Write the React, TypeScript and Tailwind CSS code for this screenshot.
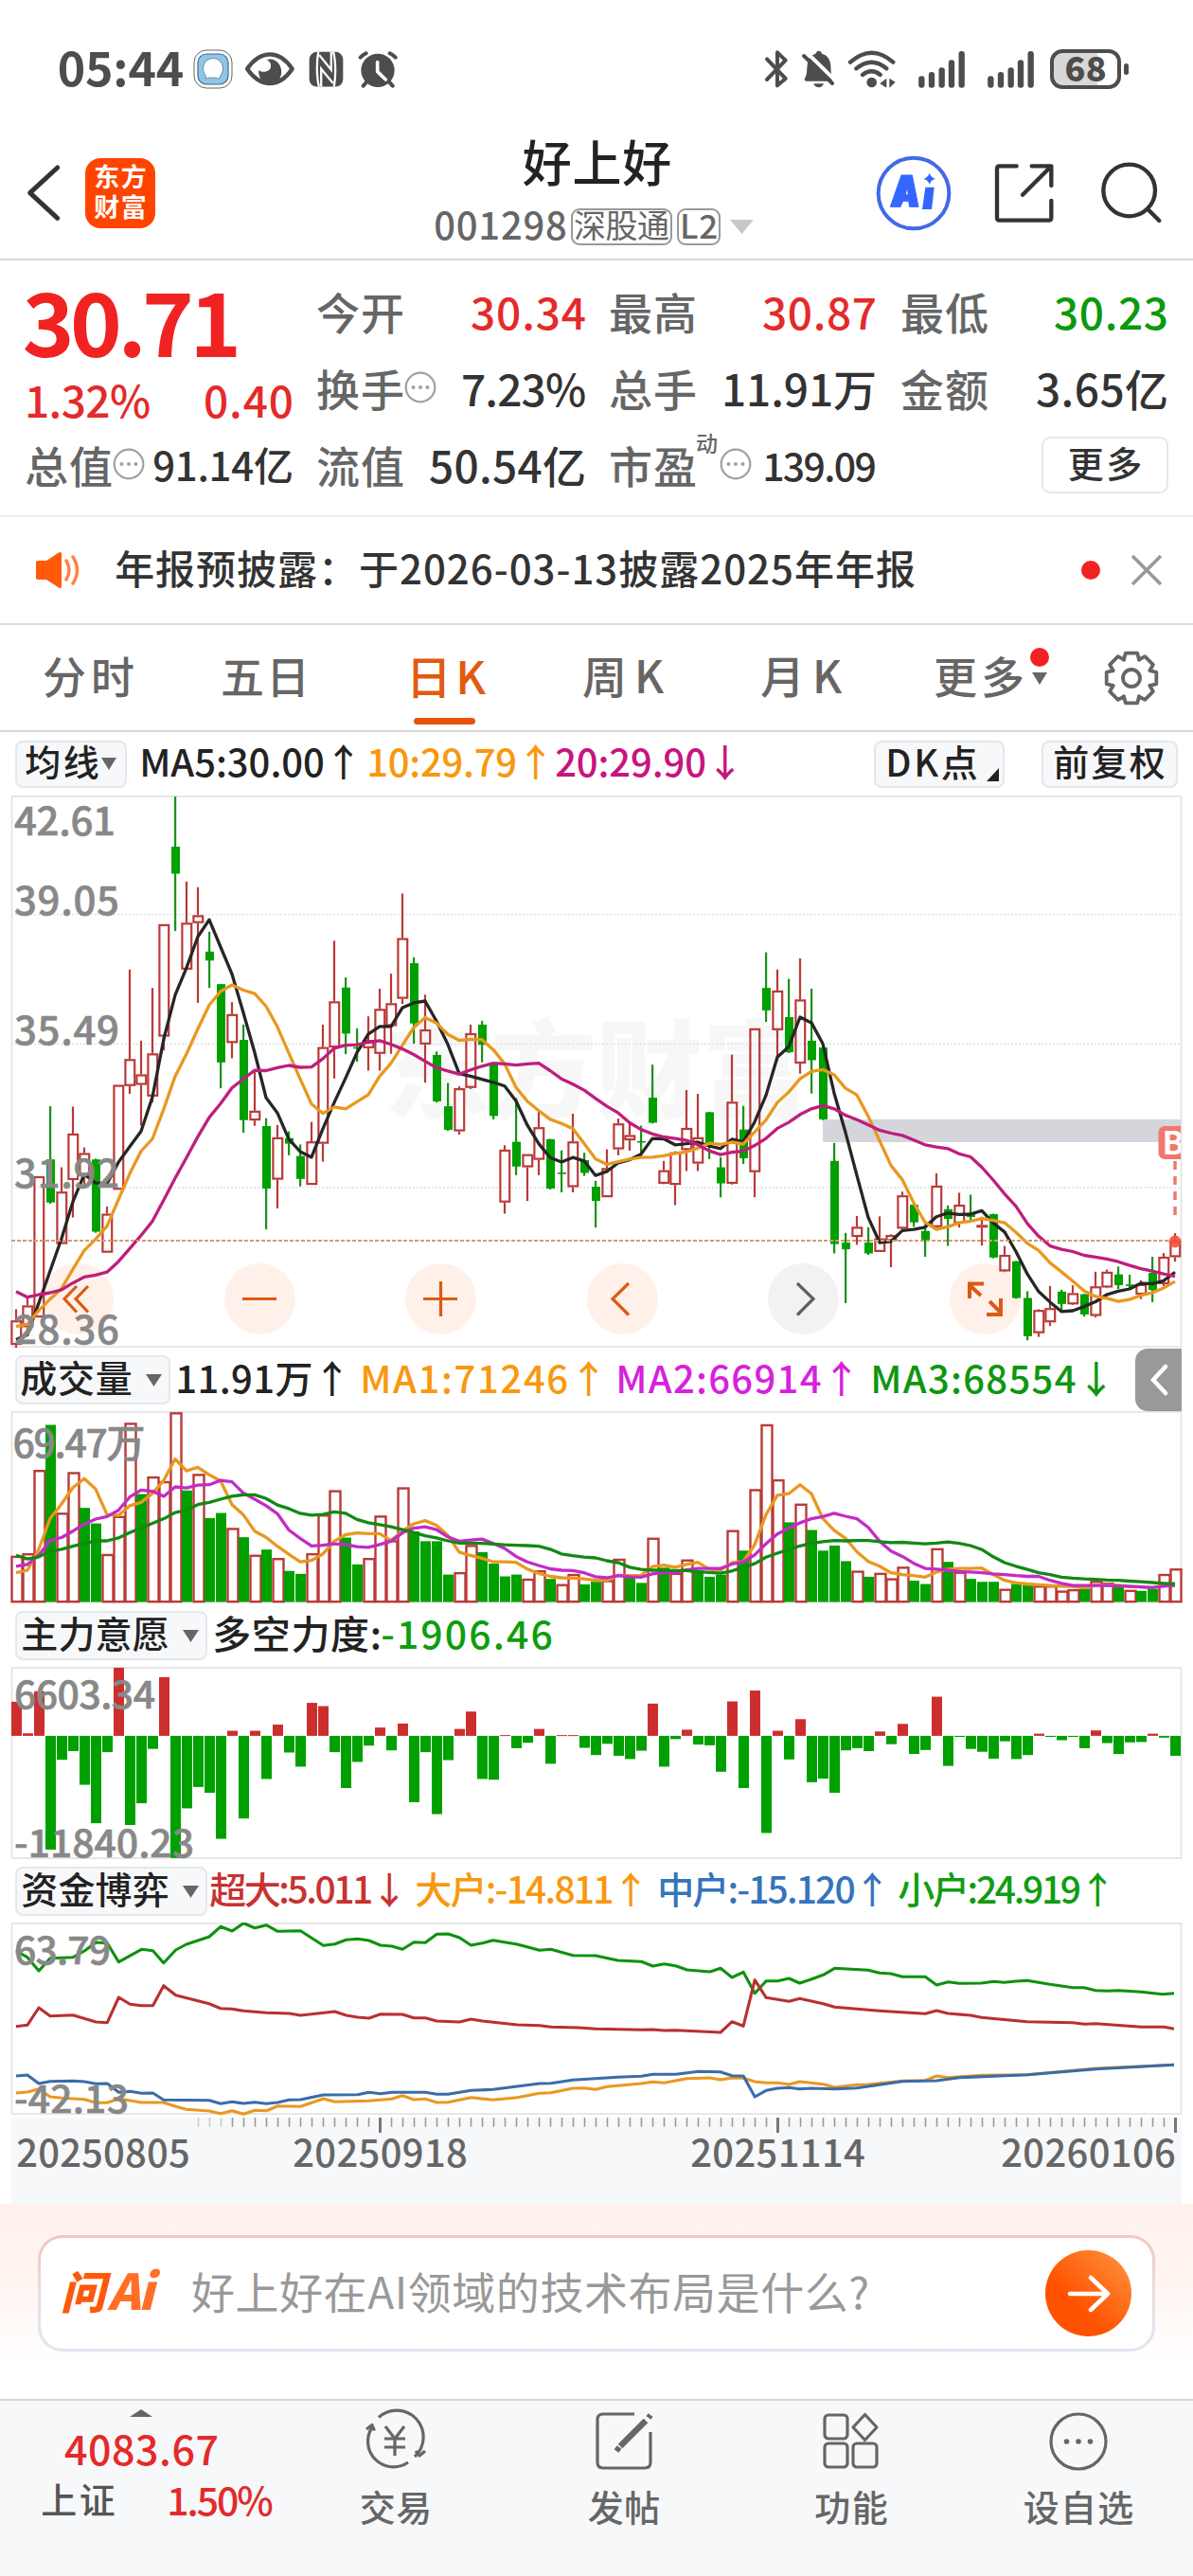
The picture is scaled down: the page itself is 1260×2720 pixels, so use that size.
import React, { useLayoutEffect, useRef, type ReactNode } from "react";

/* ---------- text fitted to a set width by letter spacing ---------- */
function Fit({ w, className = "", children }: { w: number; className?: string; children: string }) {
  const ref = useRef<HTMLSpanElement>(null);
  useLayoutEffect(() => {
    const el = ref.current;
    if (!el) return;
    el.style.letterSpacing = "0px";
    const size = parseFloat(getComputedStyle(el).fontSize);
    const natural = el.getBoundingClientRect().width;
    const n = Array.from(children).length;
    if (n > 1) el.style.letterSpacing = `${(w + size * 0.09 - natural) / (n - 1)}px`;
  }, [w, children]);
  return (
    <span className={"block shrink-0 whitespace-pre leading-none " + className} style={{ width: w }}>
      <span ref={ref} className="relative top-[-0.08em] ml-[-0.045em] inline-block">
        {children}
      </span>
    </span>
  );
}

/* ---------- chart data ---------- */
const X = (i: number) => 17 + 12 * i;
const PY = (v: number) => 830 + v / 2.529;
const VY = (v: number) => 1410 + v / 2.613;

// colour, high, body top, body bottom, low
const candles = `R1397,1427,1492,1500 R1365,1387,1445,1470 R1042,1042,1419,1419 G855,997,1112,1115 R1018,1083,1223,1223 R856,928,1052,1152 R965,980,1040,1070 G995,997,1190,1193 R1123,1142,1246,1246 R798,798,1078,1078
R490,729,801,822 R680,770,798,907 R539,714,829,845 R369,369,669,706 G28,162,234,387 R255,365,490,490 R270,345,366,579 G389,442,466,539 G529,529,738,807 R577,609,686,727
G637,678,892,926 R762,867,893,907 G887,908,1075,1184 R905,938,1051,1128 G922,940,955,986 G957,988,1049,1069 R897,949,1065,1065 R637,697,955,1003 R413,575,698,781 G511,538,661,716
G647,697,700,736 R615,678,700,760 R541,595,715,760 R501,580,641,715 R287,406,568,582 G457,473,634,688 R557,650,690,792 G709,718,842,845 G793,855,918,921 R802,807,922,931
R637,660,806,809 G627,637,691,738 G740,742,881,890 R959,971,1112,1142 G833,950,1016,1039 R983,983,1018,1108 R870,911,998,1039 G942,943,1075,1077 G973,1032,1036,1085 R875,949,1071,1085
G979,999,1033,1041 G1054,1070,1108,1179 R970,1020,1098,1098 R888,901,970,986 R900,932,946,974 G907,948,951,990 G744,832,899,901 R1001,1026,1062,1063 R975,978,1065,1119 R812,913,972,1028
R822,938,1008,1028 G870,871,955,996 G991,1018,1061,1098 R717,843,1062,1064 G854,917,994,1009 R647,647,1031,1098 G444,539,599,630 R490,546,652,734 G515,617,711,713 R460,570,741,768
G541,680,732,821 G698,698,890,892 G953,1001,1223,1248 G1193,1219,1237,1381 R1148,1177,1204,1225 G1178,1219,1248,1252 R1149,1208,1244,1244 R1197,1199,1215,1285 R1083,1093,1182,1186 G1118,1118,1165,1177
G1170,1188,1215,1257 R1034,1067,1178,1180 G1120,1130,1156,1228 R1086,1118,1168,1179 G1091,1143,1151,1158 R1150,1172,1179,1227 G1142,1143,1259,1261 R1228,1252,1296,1298 G1268,1269,1367,1369 G1349,1367,1469,1480
R1397,1399,1461,1471 R1335,1394,1432,1442 G1345,1350,1383,1400 R1333,1354,1384,1386 G1356,1357,1411,1417 R1297,1336,1415,1419 R1291,1297,1339,1341 G1283,1304,1333,1343 G1305,1331,1334,1345 R1320,1330,1358,1370
G1257,1300,1346,1378 R1247,1257,1330,1335 R1194,1215,1258,1270`
  .split(/\s+/)
  .map((s) => ({ up: s[0] === "R", v: s.slice(1).split(",").map(Number) }));

const ma5 = [1478, 1465, 1380, 1294, 1208, 1110, 1037, 1060, 1062, 1005, 963, 922, 830, 675, 558, 485, 402, 357, 430, 502, 605, 712, 832, 873, 943, 976, 991, 915, 845, 780, 712, 662, 642, 642, 592, 579, 574, 628, 690, 768, 775, 783, 791, 801, 841, 906, 955, 992, 1004, 992, 1001, 1040, 1029, 1006, 998, 983, 941, 942, 958, 955, 951, 961, 968, 943, 950, 897, 826, 724, 696, 617, 632, 688, 820, 925, 1040, 1152, 1219, 1216, 1187, 1184, 1178, 1150, 1140, 1144, 1143, 1134, 1167, 1191, 1243, 1303, 1350, 1378, 1403, 1401, 1390, 1377, 1358, 1349, 1343, 1328, 1329, 1321, 1298];
const ma10 = [1443, 1437, 1400, 1370, 1342, 1290, 1240, 1210, 1175, 1105, 1035, 975, 942, 862, 775, 715, 648, 585, 548, 531, 545, 554, 588, 643, 713, 782, 849, 874, 857, 862, 843, 824, 775, 740, 692, 645, 618, 633, 663, 679, 676, 677, 704, 742, 805, 842, 867, 890, 901, 915, 955, 996, 1010, 1003, 996, 992, 991, 987, 981, 977, 967, 954, 957, 951, 956, 924, 892, 845, 817, 782, 762, 757, 771, 807, 825, 882, 947, 1013, 1051, 1113, 1165, 1184, 1177, 1166, 1162, 1155, 1160, 1166, 1192, 1221, 1240, 1273, 1297, 1322, 1348, 1363, 1368, 1376, 1371, 1360, 1353, 1340, 1323];
const ma20 = [1350, 1365, 1358, 1353, 1345, 1327, 1311, 1306, 1298, 1270, 1235, 1200, 1162, 1105, 1047, 992, 936, 885, 848, 806, 782, 759, 760, 752, 746, 751, 750, 728, 700, 692, 691, 684, 680, 690, 702, 717, 735, 752, 761, 769, 758, 748, 740, 742, 745, 742, 740, 760, 782, 796, 812, 834, 855, 873, 899, 917, 929, 937, 941, 946, 958, 974, 984, 978, 975, 960, 941, 914, 898, 877, 862, 853, 862, 879, 891, 905, 919, 927, 933, 945, 958, 964, 968, 982, 990, 1018, 1052, 1089, 1122, 1168, 1202, 1228, 1237, 1243, 1253, 1258, 1263, 1270, 1280, 1289, 1295, 1303, 1309];

const volumes = `R608 R601 R371 G247 R489 R377 G476 G519 R603 R498 R241 G438 R389 R402 R212 G428 R382 G504 G490 R531 G557 R605 G591 R614 G650 G658 R601 R494 R427 G558 G632 R614 R497 R565 R419 G541 G568 G568 G660 R653 R578 G598 G630 G665 G660 R671 R648 G672 R686 R658 G687 G680 R675 R616 G668 G683 R558 G641 R655 R618 G650 G666 G660 R537 G594 R424 R245 R397 G516 R464 G537 G594 G580 G623 R649 G666 R655 R670 R638 G677 G686 R587 G625 R652 G672 G680 G680 R699 G686 G690 R690 R690 R704 R700 G699 R677 R682 G690 R702 G705 G700 R658 R643`
  .split(" ")
  .map((s) => ({ up: s[0] === "R", v: Number(s.slice(1)) }));
const vma1 = [655, 648, 590, 505, 465, 420, 395, 424, 494, 497, 470, 461, 436, 400, 341, 374, 364, 385, 402, 467, 495, 540, 557, 582, 604, 625, 621, 603, 568, 550, 545, 547, 547, 566, 540, 520, 511, 524, 552, 598, 607, 615, 625, 625, 626, 645, 657, 665, 669, 670, 672, 676, 676, 662, 663, 662, 638, 634, 640, 632, 626, 645, 648, 627, 624, 578, 495, 441, 437, 412, 437, 505, 538, 560, 597, 624, 637, 655, 660, 663, 667, 653, 645, 643, 643, 642, 660, 676, 683, 686, 688, 690, 692, 693, 697, 690, 688, 690, 692, 694, 696, 690, 685];
const vma2 = [637, 632, 607, 566, 558, 540, 521, 507, 500, 483, 446, 427, 430, 444, 418, 421, 413, 412, 400, 404, 435, 452, 470, 492, 537, 560, 581, 579, 575, 577, 583, 585, 577, 568, 545, 532, 528, 536, 556, 568, 565, 562, 574, 588, 610, 625, 635, 644, 648, 649, 655, 666, 669, 663, 666, 667, 658, 655, 655, 647, 643, 643, 643, 631, 625, 606, 575, 548, 532, 517, 506, 500, 491, 499, 506, 530, 568, 595, 610, 629, 643, 645, 648, 652, 653, 655, 658, 660, 663, 665, 665, 676, 684, 690, 690, 690, 690, 691, 693, 694, 696, 692, 690];
const vma3 = [607, 617, 611, 595, 590, 582, 574, 567, 567, 559, 544, 532, 519, 506, 489, 482, 467, 461, 452, 444, 440, 440, 450, 468, 478, 491, 496, 494, 487, 491, 508, 517, 522, 528, 536, 544, 553, 559, 567, 573, 573, 574, 576, 578, 579, 580, 582, 590, 603, 608, 612, 614, 622, 627, 640, 646, 648, 648, 649, 649, 652, 654, 656, 650, 640, 630, 612, 601, 591, 581, 574, 569, 566, 567, 566, 566, 569, 572, 571, 573, 575, 573, 570, 574, 580, 591, 611, 627, 637, 646, 655, 660, 667, 670, 672, 673, 675, 676, 678, 680, 682, 684, 686];

const force = [1011, 1098, 982, 1419, 1171, 1147, 1240, 1346, 1150, 917, 1351, 1291, 1141, 943, 1442, 1305, 1246, 1262, 1389, 1091, 1333, 1091, 1224, 1074, 1151, 1190, 1014, 1023, 1150, 1249, 1177, 1132, 1082, 1145, 1071, 1288, 1150, 1321, 1172, 1086, 1038, 1224, 1226, 1103, 1139, 1124, 1086, 1182, 1103, 1103, 1138, 1158, 1127, 1160, 1169, 1146, 1016, 1190, 1114, 1088, 1129, 1131, 1204, 1010, 1249, 980, 1373, 1091, 1170, 1059, 1233, 1223, 1262, 1145, 1139, 1147, 1093, 1128, 1072, 1155, 1144, 997, 1188, 1108, 1141, 1149, 1168, 1120, 1169, 1158, 1099, 1108, 1117, 1108, 1139, 1090, 1125, 1155, 1123, 1122, 1099, 1110, 1160];

const funds: [string, string][] = [
  ["#0f910f", "21,300 36,320 51,363 66,323 96,320 111,300 126,273 141,275 156,335 186,295 201,299 215,338 231,297 245,279 275,255 290,223 305,237 320,212 335,227 350,218 365,238 395,236 425,283 440,278 455,265 470,262 485,267 500,282 515,285 529,295 544,272 559,274 574,247 589,246 604,258 619,282 634,275 648,266 680,279 709,298 724,295 753,314 783,315 812,330 843,334 858,348 873,341 888,347 903,360 933,366 947,355 962,384 977,367 992,434 1007,395 1022,395 1037,387 1051,402 1066,390 1082,376 1097,355 1141,361 1156,370 1171,372 1186,382 1216,382 1231,408 1246,398 1261,403 1290,402 1306,397 1320,400 1335,396 1350,394 1380,406 1410,416 1425,416 1440,425 1455,427 1470,425 1500,430 1528,437 1543,434"],
  ["#b93030", "21,539 36,535 51,480 66,506 96,503 126,525 141,527 156,447 171,469 186,473 201,473 215,410 231,440 275,467 290,482 305,484 320,490 350,496 380,498 395,504 440,492 455,504 470,510 485,513 500,500 529,501 544,512 559,512 574,522 604,525 619,516 634,522 680,534 709,536 724,541 760,543 783,547 843,550 858,549 873,552 888,551 947,558 962,524 977,538 992,392 1007,448 1037,460 1051,451 1082,467 1097,478 1156,490 1216,499 1231,489 1246,498 1276,504 1290,511 1350,524 1410,527 1425,532 1440,530 1500,541 1530,541 1543,547"],
  ["#e9981f", "21,750 36,747 51,737 66,762 81,766 96,768 111,770 126,781 141,781 156,768 186,780 215,780 231,793 245,802 275,807 290,815 305,806 320,817 335,805 350,806 365,791 395,793 425,768 440,778 485,775 515,769 529,758 544,771 559,769 574,780 589,779 619,764 648,772 680,764 709,751 724,749 753,735 768,734 783,739 798,730 843,720 858,715 873,718 903,704 933,702 947,708 962,702 977,703 992,714 1007,718 1022,718 1037,723 1051,714 1082,722 1097,732 1126,724 1141,723 1186,712 1216,710 1231,696 1246,701 1290,694 1350,692 1440,672 1543,661"],
  ["#3a6ca9", "21,696 36,693 51,720 66,713 96,712 111,714 126,721 141,720 156,748 171,745 186,751 201,750 215,772 275,773 290,784 305,778 320,783 335,779 350,784 365,780 380,772 395,771 425,756 470,755 485,748 500,752 515,748 559,748 574,754 589,754 619,742 648,739 709,720 724,719 753,709 812,700 843,697 858,691 888,691 918,682 947,683 962,695 977,696 992,762 1007,742 1022,735 1037,733 1051,737 1066,735 1097,737 1126,734 1186,713 1231,711 1261,701 1350,692 1440,674 1543,661"],
];
const fundPoints = (s: string) =>
  s.split(" ").map((p) => {
    const [a, b] = p.split(",").map(Number);
    return `${(a / 1.2444).toFixed(1)},${(1960 + b / 3).toFixed(1)}`;
  }).join(" ");

const Line = ({ d, y, c }: { d: number[]; y: (v: number) => number; c: string }) => (
  <polyline points={d.map((v, i) => `${X(i)},${y(v).toFixed(1)}`).join(" ")} fill="none" stroke={c} strokeWidth="3.300" strokeLinejoin="round" />
);

const Frame = ({ top, bottom }: { top: number; bottom: number }) => (
  <rect x="12.5" y={top} width="1235" height={bottom - top} fill="none" stroke="#e2e2e2" strokeWidth="1.6" />
);

const RED = "#b93a38";
const GREEN = "#00a000";

function Axis({ x = 16.5, y, w, size = 42, children }: { x?: number; y: number; w: number; size?: number; children: string }) {
  return (
    <text x={x - 1.5} y={y + size * 0.367} textLength={w + 4} fontSize={size} fill="#888888" stroke="#888888" strokeWidth=".6" className="font-medium">
      {children}
    </text>
  );
}

function PriceChart() {
  return (
    <svg width="1260" height="584" viewBox="0 840 1260 584" className="relative block">
      <text x="406" y="1172" textLength="448" fontSize="112" fill="#f7f7f7" className="font-black">东方财富</text>
      {[965.6, 1102.4, 1253.9].map((y) => (
        <line key={y} x1="12" x2="1247" y1={y} y2={y} stroke="#dcdcdc" strokeWidth="1.2" strokeDasharray="2 2" />
      ))}
      <Frame top={840.9} bottom={1422} />
      <rect x="869" y="1182" width="378" height="24" fill="#d4d6db" />
      {candles.map(({ up, v }, i) => {
        const [h, t, b, l] = v.map(PY);
        const x = X(i);
        return up ? (
          <g key={i} stroke={RED} strokeWidth="2.200" fill="none">
            {t > h && <line x1={x} x2={x} y1={h} y2={t} />}
            {l > b && <line x1={x} x2={x} y1={b} y2={l} />}
            <rect x={x - 4.6} y={t + 1} width="9.8" height={Math.max(b - t - 2, 0.5)} />
          </g>
        ) : (
          <g key={i} fill={GREEN}>
            <rect x={x - 1} y={h} width="2.200" height={l - h} fill="#1a921a" />
            <rect x={x - 4} y={t} width="9" height={Math.max(b - t, 1.6)} />
          </g>
        );
      })}
      <Line d={ma5} y={PY} c="#262626" />
      <Line d={ma10} y={PY} c="#e9981f" />
      <Line d={ma20} y={PY} c="#be1e7d" />
      <line x1="12" x2="1247" y1="1310" y2="1310" stroke="#d59b6c" strokeWidth="1.8" strokeDasharray="4 2" />
      <Axis y={867} w={103}>42.61</Axis>
      <Axis y={951} w={107}>39.05</Axis>
      <Axis y={1088} w={107}>35.49</Axis>
      <Axis y={1239} w={107}>31.92</Axis>
      <Axis y={1404} w={107}>28.36</Axis>
      <path d="M1247 1189h-17a6.500 6.500 0 0 0-6.500 6.500v22a6.500 6.500 0 0 0 6.500 6.500h17z" fill="#f07868" />
      <svg x="1223" y="1188" width="24" height="38" viewBox="1223 1188 24 38">
        <text x="1227.500" y="1219" fontSize="34" fill="#fff" className="font-bold">B</text>
      </svg>
      <line x1="1241" x2="1241" y1="1226" y2="1288" stroke="#ef7a6c" strokeWidth="3.500" strokeDasharray="9 7" />
      <circle cx="1241" cy="1311" r="6.500" fill="#f4523b" fillOpacity=".9" />
    </svg>
  );
}

function VolumeChart() {
  return (
    <svg width="1260" height="204" viewBox="0 1490 1260 204" className="block">
      <Frame top={1490.8} bottom={1691.500} />
      {volumes.map(({ up, v }, i) => {
        const t = VY(v);
        return up ? (
          <rect key={i} x={X(i) - 4.500} y={t + 1.2} width="11" height={1691 - t - 1} fill="#fff" stroke={RED} strokeWidth="2.4" />
        ) : (
          <rect key={i} x={X(i) - 5} y={t} width="11" height={1691.500 - t} fill={GREEN} />
        );
      })}
      <Line d={vma1} y={VY} c="#e9981f" />
      <Line d={vma2} y={VY} c="#c22cc6" />
      <Line d={vma3} y={VY} c="#138913" />
      <Axis x={15} y={1524} w={136} size={41}>69.47万</Axis>
    </svg>
  );
}

function ForceChart() {
  const zero = VY(1105);
  return (
    <svg width="1260" height="204" viewBox="0 1760 1260 204" className="block">
      <Frame top={1761} bottom={1962} />
      {force.map((v, i) => {
        const y = VY(v);
        return <rect key={i} x={X(i) - 5} y={Math.min(y, zero)} width="11" height={Math.max(Math.abs(y - zero), 1)} fill={v < 1105 ? "#cc2e2e" : GREEN} />;
      })}
      <Axis y={1789} w={145} size={41}>6603.34</Axis>
      <Axis y={1946} w={186} size={41}>-11840.23</Axis>
    </svg>
  );
}

function FundChart() {
  return (
    <svg width="1260" height="206" viewBox="0 2030 1260 206" className="block">
      <Frame top={2031} bottom={2232} />
      {funds.map(([c, p]) => (
        <polyline key={c} points={fundPoints(p)} fill="none" stroke={c} strokeWidth="3.100" strokeLinejoin="round" />
      ))}
      <Axis y={2059} w={98} size={41}>63.79</Axis>
      <Axis y={2216} w={117} size={41}>-42.13</Axis>
    </svg>
  );
}

/* ---------- small pieces ---------- */
const Dots = ({ className = "" }: { className?: string }) => (
  <svg width="34" height="34" viewBox="0 0 34 34" className={"shrink-0 " + className}>
    <circle cx="17" cy="17" r="15.300" fill="none" stroke="#a0a0a0" strokeWidth="2.200" />
    {[9.500, 17, 24.500].map((x) => <circle key={x} cx={x} cy="17" r="2" fill="#a0a0a0" />)}
  </svg>
);

const Down = ({ w = 17, h = 13, c = "#666", className = "" }: { w?: number; h?: number; c?: string; className?: string }) => (
  <svg width={w} height={h} viewBox="0 0 10 10" preserveAspectRatio="none" className={"shrink-0 " + className}>
    <path d="M0 0h10L5 10z" fill={c} />
  </svg>
);

const Chip = ({ className, children }: { className: string; children: ReactNode }) => (
  <div className={"flex shrink-0 items-center rounded-lg border-2 border-[#e4e7ec] bg-[#f7f8fa] font-medium text-[#222] " + className}>{children}</div>
);

const Stat = ({ label, lead, children }: { label: string; lead?: ReactNode; children: ReactNode }) => (
  <div className="flex h-[81px] items-center">
    <Fit w={89} className="text-[46px] font-medium text-[#666]">{label}</Fit>
    {lead}
    <div className="ml-auto">{children}</div>
  </div>
);

const Signal = () => (
  <svg width="50" height="40" viewBox="570 36 150 120" className="block">
    {[[583, 118], [615, 105], [647, 91], [678, 67], [710, 39]].map(([x, y]) => (
      <rect key={x} x={x - 9.500} y={y} width="19" height={155 - y} rx="9" fill="#4d4d4d" />
    ))}
  </svg>
);

function StatusBar() {
  return (
    <div className="flex h-[146px] items-center">
      <Fit w={129} className="ml-[63px] text-[50px] font-bold text-[#4d4d4d]">05:44</Fit>
      <svg width="42" height="42" viewBox="0 0 42 42" className="ml-[12px]">
        <rect x="1" y="1" width="40" height="40" rx="13" fill="#fff" stroke="#666" strokeWidth="1" />
        <rect x="5" y="5" width="32" height="32" rx="9" fill="#8fc6e8" stroke="#456a80" strokeWidth="1.200" />
        <path d="M13.500 31c1-3-3-5-3-11a10.500 10.500 0 0 1 21 0c0 6-4 8-3.500 11-2 .5-3.500-1-5-1-2 0-3 .3-5 0-2-.3-2.500 1-4.500 1z" fill="#fff" stroke="#456a80" strokeWidth=".7" />
      </svg>
      <svg width="54" height="38" viewBox="715 40 162 114" className="ml-[12px]">
        <path d="M724 96C748 62 772 50 796 50s48 12 71 46c-23 34-47 46-71 46s-48-12-72-46z" fill="none" stroke="#4d4d4d" strokeWidth="13" strokeLinejoin="round" />
        <path d="M786 67a36 40 0 1 1-25 32c9 12 42 8 38-16-1-7-6-13-13-16z" fill="#4d4d4d" />
      </svg>
      <svg width="37" height="38" viewBox="919 38 112 114" className="ml-[14px]">
        <rect x="921" y="40" width="108" height="111" rx="24" fill="#4d4d4d" />
        <path d="M950 40c-6 30-6 80 2 111M1000 151c6-30 6-80-2-111" stroke="#fff" strokeWidth="7" fill="none" />
        <path d="M955 66v24l40 44v-24z" fill="#4d4d4d" />
        <path d="M959 151V94l38 46M991 40v57l-38-47" stroke="#fff" strokeWidth="7" fill="none" />
      </svg>
      <svg width="42" height="40" viewBox="1075 35 126 120" className="ml-[15px]">
        <circle cx="1138" cy="99" r="53" fill="#4d4d4d" />
        <path d="M1083 58q8-8 18-13M1194 58q-8-8-18-13M1092 148l14-16M1185 148l-14-16" stroke="#4d4d4d" strokeWidth="12" strokeLinecap="round" />
        <path d="M1137 73v30l26 25" fill="none" stroke="#fff" strokeWidth="11" strokeLinecap="round" strokeLinejoin="round" />
      </svg>
      <svg width="26" height="42" viewBox="81 34 78 124" className="ml-[387px]">
        <path d="M90 64l59 62-26 22V43l26 25-59 61" fill="none" stroke="#4d4d4d" strokeWidth="12" strokeLinecap="round" strokeLinejoin="round" />
      </svg>
      <svg width="36" height="42" viewBox="201 34 108 124" className="ml-[13px]">
        <path d="M219 134c-8 0-8-8-4-13 6-10 4-26 6-38 2-20 14-33 27-36 2-12 17-12 19 0 16 4 27 18 28 38 1 14 0 26 6 36 3 6 1 13-5 13z" fill="#4d4d4d" />
        <path d="M213 37l100 98" stroke="#fff" strokeWidth="12" />
        <path d="M210 54l90 87" stroke="#4d4d4d" strokeWidth="12" strokeLinecap="round" />
        <path d="M241 142h32c-5 16-27 16-32 0z" fill="#4d4d4d" />
      </svg>
      <svg width="51" height="42" viewBox="351 34 153 124" className="ml-[13px]">
        <path d="M360 74q68-60 136 0M379 94q49-40 96 0M399 114q29-22 56 0" fill="none" stroke="#4d4d4d" strokeWidth="13" strokeLinecap="round" />
        <circle cx="428" cy="138" r="16" fill="#4d4d4d" />
        <path d="M475 125v30l-21-13zM484 125v30l19-18z" fill="#4d4d4d" />
      </svg>
      <div className="ml-[23px]"><Signal /></div>
      <div className="ml-[23px]"><Signal /></div>
      <div className="ml-[17px] flex h-[42px] w-[75px] items-center justify-center rounded-[13px] border-[4px] border-[#4d4d4d] bg-[linear-gradient(90deg,#d8d8d8_68%,#fff_68%)]">
        <Fit w={41} className="text-[36px] font-black text-[#4d4d4d]">68</Fit>
      </div>
      <div className="ml-[3px] h-[12px] w-[5px] rounded-full bg-[#4d4d4d]" />
    </div>
  );
}

function Header() {
  return (
    <div className="flex h-[129px] border-b-2 border-[#d8d8d8] text-[#222]">
      <div className="flex h-[115px] w-[459px] items-center">
        <svg width="38" height="62" viewBox="25 398 114 184" className="ml-[28px]">
          <path d="M123 409L36 489l87 80" fill="none" stroke="#333" strokeWidth="15" strokeLinecap="round" strokeLinejoin="round" />
        </svg>
        <div className="ml-[24px] flex h-[74px] w-[74px] flex-col items-center justify-center gap-[5px] rounded-[16px] bg-[#ff4400] text-[27px] font-bold text-white">
          <Fit w={53}>东方</Fit>
          <Fit w={53}>财富</Fit>
        </div>
      </div>
      <div className="w-[342px]">
        <div className="flex h-[56px] items-center pl-[95px]">
          <Fit w={153} className="text-[52px] font-medium">好上好</Fit>
        </div>
        <div className="mt-[18px] flex h-[39px] items-center text-[#666]">
          <Fit w={137} className="ml-[1px] text-[40px] font-medium">001298</Fit>
          <div className="ml-[6px] flex h-[39px] w-[107px] items-center justify-center rounded-[9px] border-2 border-[#999]">
            <Fit w={98} className="text-[34px]">深股通</Fit>
          </div>
          <div className="ml-[5px] flex h-[39px] w-[46px] items-center justify-center rounded-[9px] border-2 border-[#999]">
            <Fit w={37} className="text-[35px] font-medium">L2</Fit>
          </div>
          <Down w={25} h={15} c="#c8c8c8" className="ml-[10px]" />
        </div>
      </div>
      <div className="flex h-[115px] items-center">
        <svg width="80" height="80" viewBox="435 369 240 240" className="ml-[124px]">
          <circle cx="555" cy="489" r="112" fill="none" stroke="#4169e8" strokeWidth="12" />
          <path d="M516 432h34l20 100h-28l-3-18h-18l-8 18h-32zM529 494h9l-4-28z" fill="#3366ff" stroke="#3366ff" strokeWidth="3" strokeLinejoin="round" fillRule="evenodd" />
          <path d="M592 470h28l-8 70h-30zM605 425q4 14 19 18-15 4-19 18-4-14-19-18 15-4 19-18z" fill="#3366ff" />
        </svg>
        <svg width="66" height="66" viewBox="808 390 198 198" className="ml-[44px]">
          <path d="M882 403h-54q-8 0-8 8v156q0 8 8 8h156q8 0 8-8v-54M930 403h62v62M988 407l-87 87" fill="none" stroke="#333" strokeWidth="13" strokeLinecap="round" strokeLinejoin="round" />
        </svg>
        <svg width="68" height="68" viewBox="1144 387 204 204" className="ml-[46px]">
          <circle cx="1239" cy="480" r="82" fill="none" stroke="#333" strokeWidth="13" />
          <path d="M1298 540l36 36" stroke="#333" strokeWidth="13" strokeLinecap="round" />
        </svg>
      </div>
    </div>
  );
}

function Quote() {
  return (
    <div className="flex h-[271px] border-b-2 border-[#ececec] pl-[28px] pt-[16px] text-[#333]">
      <div className="w-[280px]">
        <div className="flex h-[105px] items-center">
          <Fit w={223} className="text-[93px] font-bold text-[#f12222]">30.71</Fit>
        </div>
        <div className="flex h-[57px] items-center justify-between text-[46px] font-medium text-[#e42a2a]">
          <Fit w={129}>1.32%</Fit>
          <Fit w={91}>0.40</Fit>
        </div>
        <div className="flex h-[81px] items-center">
          <Fit w={89} className="text-[46px] font-medium text-[#666]">总值</Fit>
          <Dots className="-mt-2 ml-[2px]" />
          <Fit w={145} className="ml-auto text-[42px] font-medium">91.14亿</Fit>
        </div>
      </div>
      <div className="ml-[28px] w-[281px]">
        <Stat label="今开"><Fit w={118} className="text-[46px] font-medium text-[#e42a2a]">30.34</Fit></Stat>
        <Stat label="换手" lead={<Dots className="-mt-2 ml-[2px]" />}><Fit w={128} className="text-[46px] font-medium">7.23%</Fit></Stat>
        <Stat label="流值"><Fit w={162} className="text-[46px] font-medium">50.54亿</Fit></Stat>
      </div>
      <div className="ml-[28px] w-[279px]">
        <Stat label="最高"><Fit w={117} className="text-[46px] font-medium text-[#e42a2a]">30.87</Fit></Stat>
        <Stat label="总手"><Fit w={160} className="text-[46px] font-medium">11.91万</Fit></Stat>
        <Stat label="市盈" lead={<><Fit w={22} className="-mt-[48px] ml-[2px] text-[23px] font-medium text-[#666]">动</Fit><Dots className="-mt-2 ml-[2px]" /></>}>
          <Fit w={117} className="text-[41px] font-medium">139.09</Fit>
        </Stat>
      </div>
      <div className="ml-[29px] w-[281px]">
        <div className="pr-[2px]">
          <Stat label="最低"><Fit w={117} className="text-[46px] font-medium text-[#0a9a0a]">30.23</Fit></Stat>
          <Stat label="金额"><Fit w={136} className="text-[46px] font-medium">3.65亿</Fit></Stat>
        </div>
        <div className="ml-auto mt-[8px] flex h-[60px] w-[134px] items-center justify-center rounded-[9px] border-2 border-[#e8e8e8]">
          <Fit w={75} className="text-[38px] font-medium">更多</Fit>
        </div>
      </div>
    </div>
  );
}

function News() {
  return (
    <div className="flex h-[114px] items-center border-b-2 border-[#dcdcdc] pl-[36px]">
      <svg width="50" height="40" viewBox="0 0 50 40">
        <path d="M2 12q0-2 2-2h9L26 1.500q3-1.500 3 1.500v34q0 3-3 1.500L13 30H4q-2 0-2-2z" fill="#ff5a0a" />
        <path d="M34 10q6 10 0 20M41 6q9 14 0 28" fill="none" stroke="#ff8345" strokeWidth="3.500" strokeLinecap="round" />
      </svg>
      <Fit w={842} className="ml-[37px] text-[42px] font-medium text-[#333]">年报预披露：于2026-03-13披露2025年年报</Fit>
      <div className="ml-[177px] h-[20px] w-[20px] rounded-full bg-[#f12222]" />
      <svg width="32" height="32" viewBox="0 0 32 32" className="ml-[33px]">
        <path d="M1 1l30 30M31 1L1 31" stroke="#999" strokeWidth="3.600" />
      </svg>
    </div>
  );
}

const gear = Array.from({ length: 8 }, (_, k) => {
  const a = (k * Math.PI) / 4;
  return [[-0.4, 20.800], [-0.23, 27], [0.23, 27], [0.4, 20.800]].map(([d, r]) => `${(30 + r * Math.sin(a + d)).toFixed(1)},${(30 - r * Math.cos(a + d)).toFixed(1)}`).join(" ");
}).join(" ");

function Tabs() {
  return (
    <div className="flex h-[113px] items-center border-b-2 border-[#d8d8d8] text-[46px] font-medium text-[#666]">
      <Fit w={93} className="ml-[47px]">分时</Fit>
      <Fit w={90} className="ml-[95px]">五日</Fit>
      <div className="relative ml-[106px] text-[#e25a10]">
        <Fit w={80} className="text-[48px]">日K</Fit>
        <div className="absolute -bottom-[25px] left-[6px] h-[7px] w-[65px] rounded-full bg-[#e65408]" />
      </div>
      <Fit w={82} className="ml-[106px] text-[47px]">周K</Fit>
      <Fit w={82} className="ml-[106px] text-[47px]">月K</Fit>
      <Fit w={92} className="ml-[101px]">更多</Fit>
      <div className="ml-[8px] flex flex-col items-center gap-[6px] pb-[24px]">
        <div className="h-[20px] w-[20px] rounded-full bg-[#f12222]" />
        <Down w={16} h={13} />
      </div>
      <svg width="60" height="60" viewBox="0 0 60 60" className="ml-[57px]">
        <polygon points={gear} fill="none" stroke="#666" strokeWidth="3.800" strokeLinejoin="round" />
        <circle cx="30" cy="30" r="9" fill="none" stroke="#666" strokeWidth="3.800" />
      </svg>
    </div>
  );
}

const rowText = "flex h-[66px] items-center text-[40px] font-medium text-[#222]";

function Charts() {
  return (
    <>
      <div className="flex h-[67px] items-center text-[40px] font-medium">
        <Chip className="ml-[16px] h-[50px] w-[118px] pl-[10px]">
          <Fit w={75} className="text-[38px]">均线</Fit>
          <Down w={16} h={13} className="ml-[4px]" />
        </Chip>
        <Fit w={232} className="ml-[15px] text-[#222]">MA5:30.00↑</Fit>
        <Fit w={195} className="ml-[8px] text-[#f8980f]">10:29.79↑</Fit>
        <Fit w={196} className="ml-[4px] text-[#c8147f]">20:29.90↓</Fit>
        <Chip className="relative ml-[139px] h-[50px] w-[138px] pl-[12px]">
          <Fit w={94} className="text-[39px]">DK点</Fit>
          <svg width="13" height="14" viewBox="0 0 13 14" className="absolute bottom-[5px] right-[4px]"><path d="M13 0v14H0z" fill="#222" /></svg>
        </Chip>
        <Chip className="ml-[39px] h-[50px] w-[144px] pl-[12px]">
          <Fit w={115} className="text-[38px]">前复权</Fit>
        </Chip>
      </div>
      <div className="relative">
        <div className="absolute left-[45px] top-[494px] flex w-[1033px] justify-between">
          {[
            "M36 24L23 37.500l13 14M48 24L35 37.500l13 14",
            "M19 37.500h36",
            "M19 37.500h36M37.500 19v37",
            "M44 21L27 37.500l17 17",
            "M31 21l17 16.500-17 17",
            "M33 34L21 23M21 37V21.500h15M42 40l12 12M54 37v17H39",
          ].map((d, i) => (
            <svg key={d} width="75" height="75" viewBox="0 0 75 75">
              <circle cx="37.500" cy="37.500" r="37.500" fill={i === 4 ? "#f2f2f2" : "#fff0e9"} />
              <path d={d} fill="none" stroke={i === 4 ? "#606060" : "#dc5a14"} strokeWidth={i === 5 ? 4 : 3.2} />
            </svg>
          ))}
        </div>
        <PriceChart />
      </div>
      <div className={rowText}>
        <Chip className="ml-[16px] h-[52px] w-[164px] pl-[5px]">
          <Fit w={115} className="text-[39px]">成交量</Fit>
          <Down className="ml-[16px]" />
        </Chip>
        <Fit w={182} className="ml-[7px]">11.91万↑</Fit>
        <Fit w={258} className="ml-[13px] text-[#f8980f]">MA1:71246↑</Fit>
        <Fit w={255} className="ml-[12px] text-[#d622dc]">MA2:66914↑</Fit>
        <Fit w={255} className="ml-[14px] text-[#0f960f]">MA3:68554↓</Fit>
        <div className="ml-[23px] flex h-[66px] w-[49px] items-center justify-center rounded-l-[13px] bg-[#999]">
          <svg width="22" height="34" viewBox="0 0 22 34"><path d="M18 3L5 17l13 14" fill="none" stroke="#fff" strokeWidth="4.500" strokeLinecap="round" /></svg>
        </div>
      </div>
      <VolumeChart />
      <div className={rowText}>
        <Chip className="ml-[16px] h-[52px] w-[203px] pl-[6px]">
          <Fit w={153} className="text-[39px]">主力意愿</Fit>
          <Down className="ml-[16px]" />
        </Chip>
        <Fit w={175} className="ml-[7px] text-[41px]">多空力度:</Fit>
        <Fit w={178} className="ml-[3px] text-[41px] text-[#0f9d0f]">-1906.46</Fit>
      </div>
      <ForceChart />
      <div className={rowText}>
        <Chip className="ml-[16px] h-[52px] w-[203px] pl-[6px]">
          <Fit w={153} className="text-[39px]">资金博弈</Fit>
          <Down className="ml-[16px]" />
        </Chip>
        <Fit w={206} className="ml-[4px] text-[39px] text-[#c83232]">超大:5.011↓</Fit>
        <Fit w={244} className="ml-[11px] text-[39px] text-[#f8980f]">大户:-14.811↑</Fit>
        <Fit w={243} className="ml-[12px] text-[39px] text-[#3574bb]">中户:-15.120↑</Fit>
        <Fit w={227} className="ml-[11px] text-[39px] text-[#0f9d0f]">小户:24.919↑</Fit>
      </div>
      <FundChart />
      <div className="mx-[12px] h-[91px] bg-[#f7f8fa]">
        <svg width="1236" height="18" viewBox="12 2236 1236 18" className="block">
          {Array.from({ length: 87 }, (_, k) => {
            const x = 209.500 + 12 * k;
            const major = k === 16 || k === 51 || k === 86;
            return <line key={k} x1={x} x2={x} y1="2236" y2={major ? 2252 : 2245.7} stroke={major ? "#777" : k < 3 ? "#ccc" : "#999"} strokeWidth={major ? 3 : 1.6} />;
          })}
        </svg>
        <div className="flex h-[40px] items-center pl-[7px] text-[40px] font-medium text-[#666]">
          <Fit w={180}>20250805</Fit>
          <Fit w={181} className="ml-[112px]">20250918</Fit>
          <Fit w={181} className="ml-[239px]">20251114</Fit>
          <Fit w={181} className="ml-[147px]">20260106</Fit>
        </div>
      </div>
    </>
  );
}

function AskBar() {
  return (
    <div className="h-[206px] bg-[linear-gradient(180deg,#fff2ed_0%,#fff5f1_40%,#ffffff_82%)] pt-[33px]">
      <div className="mx-[40px] rounded-[26px] bg-[linear-gradient(180deg,#f2c6bd,#e8dde2_50%,#dfe6f0)] p-[3px]">
        <div className="flex h-[117px] items-center rounded-[23px] bg-white">
          <div className="ml-[23px] flex w-[104px] items-center">
            <Fit w={45} className="text-[47px] font-black italic text-[#fc5a0a]">问</Fit>
            <Fit w={44} className="ml-[5px] text-[52px] font-black italic text-[#ff6f28]">Ai</Fit>
          </div>
          <Fit w={712} className="ml-[34px] text-[46px] text-[#999]">好上好在AI领域的技术布局是什么?</Fit>
          <div className="ml-auto mr-[22px] flex h-[91px] w-[91px] items-center justify-center rounded-full bg-[linear-gradient(45deg,#ff5200_35%,#ff9540)]">
            <svg width="46" height="40" viewBox="0 0 46 40"><path d="M3 20h40M25 3l18 17-18 17" fill="none" stroke="#fff" strokeWidth="4.500" strokeLinecap="round" strokeLinejoin="round" /></svg>
          </div>
        </div>
      </div>
    </div>
  );
}

const navIcons = [
  <g key="a">
    <path d="M17 9.500A27 27 0 0 1 55 51M48 57A27 27 0 0 1 10 20" />
    <path d="M4 22l6-4.500 2.500 6M66 45l-6 5-4-5" />
    <path d="M24 19l10 13 10-13M34 32v18M23 32h22M23 41h22" />
  </g>,
  <g key="b">
    <path d="M46 6H13q-6 0-6 6v45q0 6 6 6h44q6 0 6-6V25" />
    <path d="M58 13L31 40" strokeWidth="6.500" />
    <path d="M61 10l2-3M30 41l-3 4" strokeWidth="6" />
  </g>,
  <g key="c">
    <rect x="7" y="7" width="24" height="25" rx="4" /><rect x="7" y="37" width="24" height="25" rx="4" /><rect x="37" y="37" width="25" height="25" rx="4" />
    <path d="M49.500 6.500L62 20 49.500 33.500 37 20z" />
  </g>,
  <g key="d">
    <circle cx="35" cy="35" r="29" />
    {[22.500, 35, 47.500].map((x) => <circle key={x} cx={x} cy="35" r="2.800" fill="#666" stroke="none" />)}
  </g>,
];

function NavItem({ w, ml, label, icon }: { w: number; ml: string; label: string; icon: ReactNode }) {
  return (
    <div className={"flex w-[140px] shrink-0 flex-col items-center " + ml}>
      <svg width="70" height="70" viewBox="0 0 70 70" fill="none" stroke="#666" strokeWidth="3.200" strokeLinejoin="round" className="mt-[8px] block">{icon}</svg>
      <Fit w={w} className="mt-[17px] text-[38px] font-medium text-[#666]">{label}</Fit>
    </div>
  );
}

function BottomNav() {
  return (
    <div className="flex h-[187px] border-t-2 border-[#d4d7da] bg-[#f7f8fa]">
      <div className="ml-[45px] flex w-[243px] flex-col">
        <svg width="24" height="8" viewBox="0 0 24 8" className="ml-[92px] mt-[9px]"><path d="M12 0l12 8H0z" fill="#666" /></svg>
        <Fit w={159} className="ml-[25px] mt-[14px] text-[43px] font-medium text-[#e42a2a]">4083.67</Fit>
        <div className="mt-[12px] flex items-center">
          <Fit w={75} className="text-[38px] font-medium text-[#555]">上证</Fit>
          <Fit w={109} className="ml-[58px] text-[41px] font-medium text-[#e42a2a]">1.50%</Fit>
        </div>
      </div>
      <NavItem w={73} ml="ml-[60px]" label="交易" icon={navIcons[0]} />
      <NavItem w={73} ml="ml-[101px]" label="发帖" icon={navIcons[1]} />
      <NavItem w={74} ml="ml-[100px]" label="功能" icon={navIcons[2]} />
      <NavItem w={113} ml="ml-[100px]" label="设自选" icon={navIcons[3]} />
    </div>
  );
}

export default function App() {
  return (
    <div className="h-[2720px] w-[1260px] overflow-hidden bg-white font-['Noto_Sans_CJK_SC',sans-serif]">
      <StatusBar />
      <Header />
      <Quote />
      <News />
      <Tabs />
      <Charts />
      <AskBar />
      <BottomNav />
    </div>
  );
}
